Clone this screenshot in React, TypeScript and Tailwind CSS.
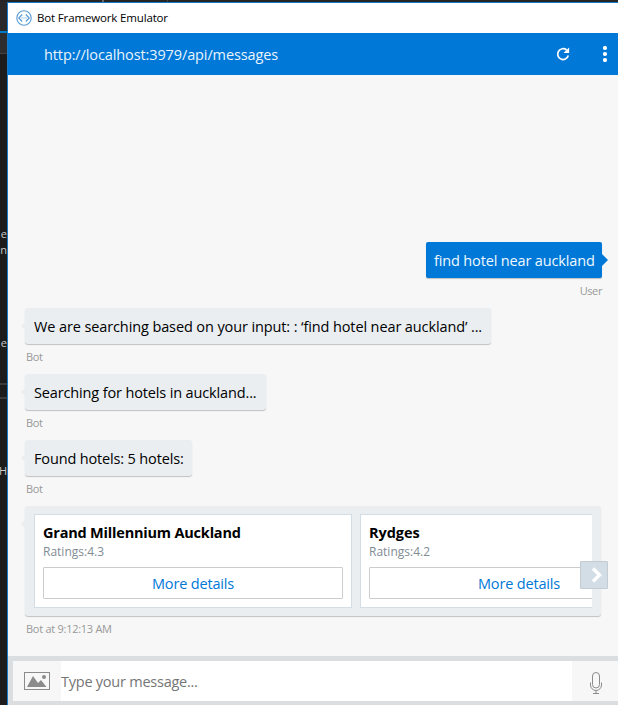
import React from "react";

const fontStack = "font-['Open_Sans','Noto_Sans',sans-serif]";

function Message({ children, width, spacing }: { children: React.ReactNode; width: string; spacing: string }) {
  return (
    <div className="h-[66px]">
      <div className={`relative -ml-px flex h-9 items-center rounded-[3px] bg-[#eaeef1] pl-[9px] pt-0.5 shadow-[0_1px_1px_rgba(0,0,0,0.22)] ${width}`}>
        <svg className="absolute -left-[4px] top-3 h-3 w-[6px]" viewBox="0 0 6 12">
          <path d="M6 0L0 6L6 12Z" fill="#eaeef1" />
        </svg>
        <span className={`whitespace-nowrap text-[14.5px] leading-5 text-black ${spacing}`}>{children}</span>
      </div>
      <div className="mt-[5px] text-[11px] leading-4 tracking-[-0.3px] text-[#999]">Bot</div>
    </div>
  );
}

function HotelCard({ name, rating, spacing }: { name: string; rating: string; spacing: string }) {
  return (
    <div className="h-[94px] w-[318px] shrink-0 border border-[#d2dde5] bg-white px-2 pt-2">
      <div className={`whitespace-nowrap text-[14.5px] font-bold leading-5 text-black ${spacing}`}>{name}</div>
      <div className="pt-px text-[12px] leading-4 tracking-normal text-[#808c95]">Ratings:{rating}</div>
      <button className="mt-[7px] flex h-8 w-[300px] items-center justify-center rounded-[1px] border border-[#ccc] bg-white pt-0.5 text-[14.5px] leading-5 tracking-[-0.17px] text-[#0078d7]">
        More details
      </button>
    </div>
  );
}

export default function App() {
  return (
    <div className={`flex h-[705px] w-[618px] flex-col overflow-hidden bg-[#1c1c1c] ${fontStack}`}>
      <div className="flex h-[2px] shrink-0 bg-[#252526]">
        <div className="ml-[102px] w-[2px] bg-[#68686b]" />
        <div className="ml-[63px] w-px bg-[#444]" />
      </div>
      <div className="flex min-h-0 flex-1">
        <div className="flex w-[7px] shrink-0 flex-col overflow-hidden text-[11px] leading-4 text-[#c8c8c8]">
          <div className="h-[29px] shrink-0 bg-[#29292b]" />
          <div className="h-[2px] shrink-0 bg-[#007acc]" />
          <div className="h-5 shrink-0 bg-[#2d2d30]" />
          <div className="h-px shrink-0 bg-[#434346]" />
          <div className="mt-[172px] flex h-4 shrink-0 justify-end"><span>e</span></div>
          <div className="flex h-4 shrink-0 justify-end"><span>n</span></div>
          <div className="mt-[77px] flex h-4 shrink-0 justify-end"><span>e</span></div>
          <div className="mt-8 h-[2px] shrink-0 bg-[#3b3b3d]" />
          <div className="mt-3 h-[2px] shrink-0 bg-[#3b3b3d]" />
          <div className="mt-[64px] flex h-4 shrink-0 justify-end"><span>H</span></div>
        </div>
        <div className="flex min-w-0 flex-1 flex-col border-l border-t border-[#1979ca] bg-[#f7f7f7]">
          <div className="flex h-[30px] shrink-0 items-center bg-white pl-2">
            <svg className="size-4" viewBox="0 0 16 16" fill="none" stroke="#5a9bd3">
              <circle cx="8" cy="8" r="7.2" strokeWidth="1.1" />
              <path d="M6.2 4.5L2.8 8L6.2 11.5M9.8 4.5L13.2 8L9.8 11.5" strokeWidth="1.2" />
              <path d="M5.5 8h1M7.5 8h1M9.5 8h1" strokeWidth="1.1" />
            </svg>
            <span className="ml-[5px] whitespace-nowrap text-[11.5px] leading-4 tracking-[-0.15px] text-black">Bot Framework Emulator</span>
          </div>
          <div className="flex h-[42px] shrink-0 items-center bg-[#0078d7] pl-9 text-white">
            <span className="w-[504px] whitespace-nowrap pt-0.5 text-[14.5px] leading-5 tracking-[-0.11px] text-[#e9f4fc]">http://localhost:3979/api/messages</span>
            <svg className="ml-2 size-[14px] shrink-0" viewBox="0 0 14 14">
              <path d="M10.6 3A5.4 5.4 0 1 0 12.3 8.6" fill="none" stroke="#fff" strokeWidth="1.7" />
              <path d="M13.1 0.5V6.1H7.5Z" fill="#fff" />
            </svg>
            <svg className="ml-[33px] h-4 w-[5px] shrink-0" viewBox="0 0 5 16" fill="#fff">
              <circle cx="2" cy="2" r="2.1" />
              <circle cx="2" cy="8" r="2.1" />
              <circle cx="2" cy="14" r="2.1" />
            </svg>
          </div>
          <div className="h-[581px] shrink-0 pl-[18px] pt-[167px]">
            <div className="mr-4 flex h-[66px] flex-col items-end">
              <div className="relative flex h-9 w-[176px] items-center rounded-[2px] bg-[#0078d7] pl-2 pt-0.5 shadow-[0_1px_1px_rgba(0,0,0,0.22)]">
                <span className="whitespace-nowrap text-[14.5px] leading-5 tracking-[-0.15px] text-[#f0f8ff]">find hotel near auckland</span>
                <svg className="absolute -right-[6px] top-3 h-3 w-[6px]" viewBox="0 0 6 12">
                  <path d="M0 0L6 6L0 12Z" fill="#0078d7" />
                </svg>
              </div>
              <div className="mt-[5px] text-[11px] leading-4 tracking-[-0.4px] text-[#999]">User</div>
            </div>
            <Message width="w-[466px]" spacing="tracking-[-0.11px]">We are searching based on your input: : ‘find hotel near auckland’ ...</Message>
            <Message width="w-[241px]" spacing="tracking-[-0.14px]">Searching for hotels in auckland...</Message>
            <Message width="w-[167px]" spacing="tracking-[-0.15px]">Found hotels: 5 hotels:</Message>
            <div className="relative -ml-px h-[110px] w-[576px] rounded-[3px] bg-[#eaeef1] py-2 pl-[9px] shadow-[0_1px_1px_rgba(0,0,0,0.22)]">
              <svg className="absolute -left-[4px] top-3 h-3 w-[6px]" viewBox="0 0 6 12">
                <path d="M6 0L0 6L6 12Z" fill="#eaeef1" />
              </svg>
              <div className="flex w-[558px] gap-2 overflow-hidden">
                <HotelCard name="Grand Millennium Auckland" rating="4.3" spacing="tracking-[-0.2px]" />
                <HotelCard name="Rydges" rating="4.2" spacing="tracking-[-0.05px]" />
              </div>
              <button className="absolute -right-[7px] top-[55px] flex size-7 items-center justify-center rounded-[1px] border border-[#c5ccd1] bg-[#d2dde5] pl-1">
                <svg className="h-4 w-[11px]" viewBox="0 0 11 16" fill="none">
                  <path d="M2 1.5L8.5 8L2 14.5" stroke="#fff" strokeWidth="3.4" />
                </svg>
              </button>
            </div>
            <div className="mt-[5px] whitespace-nowrap text-[11px] leading-4 tracking-[-0.27px] text-[#999]">Bot at 9:12:13 AM</div>
          </div>
          <div className="flex h-[49px] shrink-0 border-b-4 border-l-[5px] border-t-[5px] border-[#dbdee1]">
            <div className="flex w-12 shrink-0 items-center justify-center">
              <svg className="h-[18px] w-[26px]" viewBox="0 0 26 18">
                <rect x="0.5" y="0.5" width="25" height="17" fill="none" stroke="#8b8b8b" />
                <path d="M3 15L9 4L14 11L17 8L22.5 15Z" fill="#8b8b8b" />
                <circle cx="20" cy="5" r="2" fill="#8b8b8b" />
              </svg>
            </div>
            <div className="flex w-[511px] shrink-0 items-center bg-white pt-0.5">
              <span className="whitespace-nowrap text-[14.5px] leading-5 tracking-[-0.24px] text-[#757575]">Type your message...</span>
            </div>
            <div className="flex flex-1 items-center justify-center pl-0.5 pt-1">
              <svg className="h-[22px] w-3" viewBox="0 0 12 22" fill="none" stroke="#8b8b8b">
                <rect x="2.5" y="0.5" width="7" height="15.5" rx="3.5" />
                <path d="M0.5 10.5V13A5.5 5.5 0 0 0 11.5 13V10.5M6 18.5V21.5M3 21.5H9" />
              </svg>
            </div>
          </div>
        </div>
      </div>
    </div>
  );
}
